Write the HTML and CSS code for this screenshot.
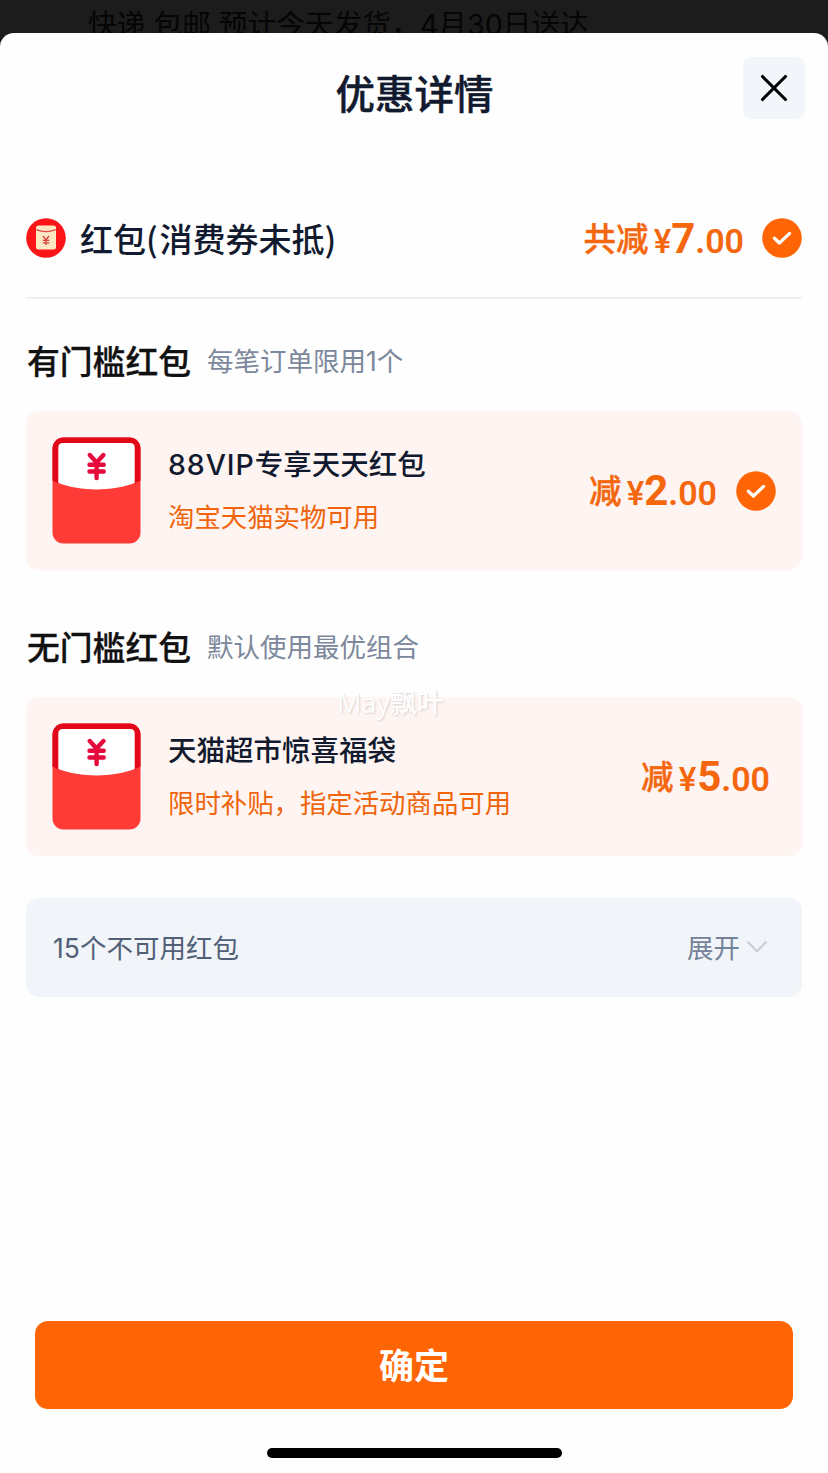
FILE: index.html
```html
<!DOCTYPE html>
<html lang="zh-CN">
<head>
<meta charset="utf-8">
<title>优惠详情</title>
<link rel="stylesheet" href="styles.css">
</head>
<body>
<svg class="defs" width="0" height="0" aria-hidden="true">
  <symbol id="check" viewBox="0 0 40 40">
    <circle cx="20" cy="20" r="19.800" fill="#ff6504"/>
    <path d="M12.400 20.200l5 4.800L27.600 15.400" fill="none" stroke="#fff" stroke-width="3.300" stroke-linecap="round" stroke-linejoin="round"/>
  </symbol>
  <symbol id="envelope" viewBox="0 0 89 107">
    <rect x="0.500" y="0.500" width="88" height="106" rx="11" fill="#ff3b38"/>
    <path d="M.5 43.500V11.500a11 11 0 0 1 11-11h66a11 11 0 0 1 11 11v32l-6 3h-76z" fill="#e00819"/>
    <path d="M6.300 46V10.500q0-4.500 4.500-4.500h67.400q4.500 0 4.500 4.500V46C60 54.600 29 54.600 6.300 46z" fill="#fff"/>
    <path d="M37.800 18l6.800 7.500 6.800-7.500M37.500 27.800h14.200M37.500 34.500h14.200M44.600 27v14" fill="none" stroke="#e5093c" stroke-width="4.400" stroke-linecap="round" stroke-linejoin="round"/>
  </symbol>
</svg>
<div class="screen">
  <div class="backdrop">快递 包邮 预计今天发货，4月30日送达</div>
  <main class="sheet">
    <header class="header">
      <h1 class="title">优惠详情</h1>
      <button class="close" aria-label="关闭">
        <svg width="30" height="30" viewBox="0 0 30 30"><path d="M3.500 3.500l23 23M26.500 3.500l-23 23" fill="none" stroke="#000" stroke-width="3.100" stroke-linecap="round"/></svg>
      </button>
    </header>

    <div class="summary">
      <svg class="round-icon" viewBox="0 0 40 40">
        <circle cx="20" cy="20" r="19.800" fill="#fb1518"/>
        <rect x="10" y="7.500" width="20" height="24" rx="2.500" fill="#fbe7c4"/>
        <path d="M10.200 11.600Q20 15.600 29.800 11.600" fill="none" stroke="#dc4a48" stroke-width="1.200"/>
        <path d="M17 18l3 3.800L23 18M16.800 22.300h6.400M16.800 24.800h6.400M20 22v5" fill="none" stroke="#d93b38" stroke-width="1.300"/>
      </svg>
      <span class="summary-name">红包<span class="paren">(</span>消费券未抵<span class="paren">)</span></span>
      <div class="amount"><span class="label">共减</span><span class="yen">¥</span><span class="whole">7</span><span class="dot">.</span><span class="cents">00</span></div>
      <svg class="check"><use href="#check"/></svg>
    </div>

    <section class="group">
      <div class="group-head"><h2 class="group-title">有门槛红包</h2><span class="hint">每笔订单限用1个</span></div>
      <article class="card">
        <svg class="envelope"><use href="#envelope"/></svg>
        <div class="info"><div class="name"><span class="vip">88VIP</span>专享天天红包</div><div class="desc">淘宝天猫实物可用</div></div>
        <div class="amount"><span class="label">减</span><span class="yen">¥</span><span class="whole">2</span><span class="dot">.</span><span class="cents">00</span></div>
        <svg class="check"><use href="#check"/></svg>
      </article>
    </section>

    <section class="group second">
      <div class="group-head"><h2 class="group-title">无门槛红包</h2><span class="hint">默认使用最优组合</span></div>
      <article class="card">
        <svg class="envelope"><use href="#envelope"/></svg>
        <div class="info"><div class="name">天猫超市惊喜福袋</div><div class="desc">限时补贴，指定活动商品可用</div></div>
        <div class="amount last"><span class="label">减</span><span class="yen">¥</span><span class="whole">5</span><span class="dot">.</span><span class="cents">00</span></div>
        <span class="watermark">May飘叶</span>
      </article>
    </section>

    <div class="unavailable">
      <span class="count">15个不可用红包</span>
      <span class="expand">展开</span>
      <svg class="chevron" viewBox="0 0 20 12"><path d="M1.200 1.200L10 10.400l8.800-9.200" fill="none" stroke="#c9ced6" stroke-width="2.200" stroke-linecap="round" stroke-linejoin="round"/></svg>
    </div>

    <footer class="footer">
      <button class="confirm">确定</button>
      <div class="home"></div>
    </footer>
  </main>
</div>
</body>
</html>
```
FILE: styles.css
```css
* { box-sizing: border-box; }
body {
  margin: 0;
  background: #1c1c1c;
  font-family: "Noto Sans CJK SC", sans-serif;
}
h1, h2 { margin: 0; }
button { border: 0; padding: 0; font-family: inherit; }
svg { display: block; flex: none; }
.defs { position: absolute; }
.screen {
  width: 828px;
  height: 1473px;
  display: flex;
  flex-direction: column;
  overflow: hidden;
}
.backdrop {
  height: 33px;
  flex: none;
  padding: 5px 0 0 88px;
  font-family: Inter, "Noto Sans CJK SC", sans-serif;
  font-size: 28.700px;
  line-height: 40px;
  color: #050505;
  white-space: nowrap;
}
.sheet {
  flex: 1;
  position: relative;
  display: flex;
  flex-direction: column;
  background: #fefefe;
  border-radius: 14px 14px 0 0;
}
.header {
  height: 168px;
  flex: none;
  display: grid;
  grid-template-columns: 85px 1fr 62px;
  align-items: start;
  padding: 24px 23px 0 0;
}
.title {
  grid-column: 2;
  text-align: center;
  font-size: 39.500px;
  line-height: 60px;
  font-weight: 500;
  color: #111a2e;
  padding: 5px 0 0 1px;
  -webkit-text-stroke: 0.400px currentColor;
}
.close {
  height: 62px;
  border-radius: 8px;
  background: #f2f5f9;
  display: grid;
  place-items: center;
}
.summary {
  height: 98px;
  flex: none;
  margin: 0 26px;
  padding-bottom: 22px;
  display: flex;
  align-items: center;
  border-bottom: 2px solid #f0f0f1;
}
.round-icon, .check { width: 40px; height: 40px; }
.summary-name {
  margin-left: 14px;
  flex: 1;
  font-size: 33px;
  line-height: 48px;
  font-weight: 500;
  color: #111a2e;
}
.paren { letter-spacing: 1.800px; }
.amount {
  display: flex;
  align-items: baseline;
  color: #f4670f;
  line-height: 48px;
  margin-right: 18px;
  font-family: Roboto, "Noto Sans CJK SC", sans-serif;
}
.card .amount { margin-right: 19px; }
.amount .label {
  font-family: "Noto Sans CJK SC", sans-serif;
  font-size: 32.500px;
  font-weight: 500;
  -webkit-text-stroke: 0.400px currentColor;
}
.yen, .whole, .dot, .cents { transform: translateY(2px); }
.yen { font-size: 33px; font-weight: 500; margin-left: 5px; }
.whole { font-size: 42px; font-weight: 700; }
.dot { font-size: 34px; font-weight: 700; }
.cents { font-size: 34px; font-weight: 600; }
.group-head {
  height: 112px;
  margin: 0 27px;
  padding-top: 36px;
  display: flex;
  align-items: flex-start;
}
.second .group-head { height: 127px; padding-top: 51px; }
.group-title {
  font-size: 32.800px;
  line-height: 50px;
  font-weight: 500;
  color: #111;
  -webkit-text-stroke: 0.300px currentColor;
}
.hint {
  margin-left: 16px;
  font-family: Inter, "Noto Sans CJK SC", sans-serif;
  font-size: 26.500px;
  line-height: 52px;
  color: #7c889b;
}
.card {
  position: relative;
  height: 159px;
  margin: 0 26px;
  padding: 0 26px;
  display: flex;
  align-items: center;
  border-radius: 13px;
  background: #fef4f1;
}
.envelope { width: 89px; height: 107px; }
.info { flex: 1; margin-left: 27px; padding-bottom: 2px; }
.name {
  padding-top: 2px;
  font-family: Inter, "Noto Sans CJK SC", sans-serif;
  font-size: 28.500px;
  line-height: 50px;
  font-weight: 500;
  color: #111a2e;
}
.vip { letter-spacing: 0.900px; }
.desc { font-size: 26.400px; line-height: 52px; color: #f0650c; }
.card .amount.last { margin-right: 6px; }
.last .yen { margin-right: 1px; }
.watermark {
  position: absolute;
  left: 311px;
  top: -13px;
  font-family: "Open Sans", "Noto Sans CJK SC", sans-serif;
  font-size: 27px;
  line-height: 38px;
  font-weight: 500;
  color: #fff;
  text-shadow: 1px 1px 2px #d8d2d0;
}
.unavailable {
  height: 99px;
  flex: none;
  margin: 42px 26px 0;
  padding: 0 35px 2px 27px;
  display: flex;
  align-items: center;
  border-radius: 13px;
  background: #f1f5f9;
  font-family: Inter, "Noto Sans CJK SC", sans-serif;
  font-size: 26.500px;
}
.count { flex: 1; color: #526077; }
.expand { color: #75839a; }
.chevron { width: 20px; height: 12px; margin-left: 7px; }
.footer { margin-top: auto; padding: 0 35px 15px; }
.confirm {
  display: block;
  width: 100%;
  height: 88px;
  padding-bottom: 3px;
  border-radius: 13px;
  background: #ff6504;
  color: #fff;
  font-size: 35px;
  font-weight: 700;
}
.home { width: 295px; height: 10px; margin: 39px auto 0; border-radius: 5px; background: #000; }
```
